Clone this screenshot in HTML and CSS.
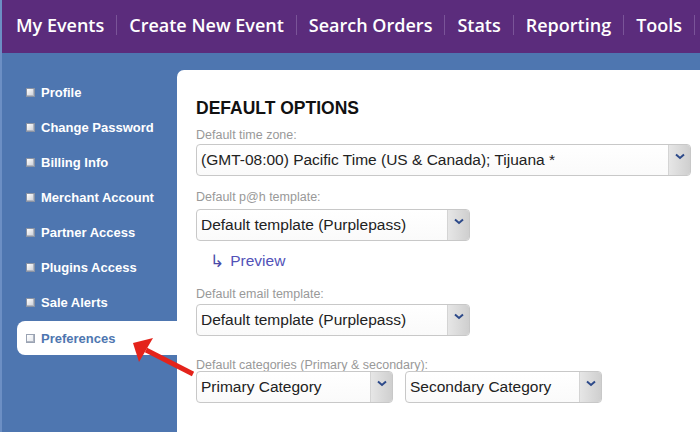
FILE: index.html
```html
<!DOCTYPE html>
<html lang="en">
<head>
  <title>Preferences</title>
  <link rel="stylesheet" href="styles.css">
</head>
<body>
  <div class="topnav">
    <a>My Events</a>
    <a>Create New Event</a>
    <a>Search Orders</a>
    <a>Stats</a>
    <a>Reporting</a>
    <a>Tools</a>
  </div>
  <div class="main">
    <ul class="sidebar">
      <li><span class="box"></span>Profile</li>
      <li><span class="box"></span>Change Password</li>
      <li><span class="box"></span>Billing Info</li>
      <li><span class="box"></span>Merchant Account</li>
      <li><span class="box"></span>Partner Access</li>
      <li><span class="box"></span>Plugins Access</li>
      <li><span class="box"></span>Sale Alerts</li>
      <li class="active"><span class="box"></span>Preferences</li>
    </ul>
    <div class="panel">
      <h2>DEFAULT OPTIONS</h2>

      <div class="field f-zone">
        <div class="label">Default time zone:</div>
        <div class="select wide"><span class="val">(GMT-08:00) Pacific Time (US &amp; Canada); Tijuana *</span><span class="arrow"><svg width="10" height="7" viewBox="0 0 10 7"><path d="M1 1.5 L5 5 L9 1.5" fill="none" stroke="#2d4a8a" stroke-width="2"/></svg></span></div>
      </div>

      <div class="field f-pah">
        <div class="label">Default p@h template:</div>
        <div class="select mid"><span class="val">Default template (Purplepass)</span><span class="arrow"><svg width="10" height="7" viewBox="0 0 10 7"><path d="M1 1.5 L5 5 L9 1.5" fill="none" stroke="#2d4a8a" stroke-width="2"/></svg></span></div>
        <div class="preview"><span class="turn">&#8627;</span><a>Preview</a></div>
      </div>

      <div class="field f-email">
        <div class="label">Default email template:</div>
        <div class="select mid"><span class="val">Default template (Purplepass)</span><span class="arrow"><svg width="10" height="7" viewBox="0 0 10 7"><path d="M1 1.5 L5 5 L9 1.5" fill="none" stroke="#2d4a8a" stroke-width="2"/></svg></span></div>
      </div>

      <div class="field f-cat">
        <div class="label">Default categories (Primary &amp; secondary):</div>
        <div class="pair">
          <div class="select small"><span class="val">Primary Category</span><span class="arrow"><svg width="10" height="7" viewBox="0 0 10 7"><path d="M1 1.5 L5 5 L9 1.5" fill="none" stroke="#2d4a8a" stroke-width="2"/></svg></span></div>
          <div class="select small"><span class="val">Secondary Category</span><span class="arrow"><svg width="10" height="7" viewBox="0 0 10 7"><path d="M1 1.5 L5 5 L9 1.5" fill="none" stroke="#2d4a8a" stroke-width="2"/></svg></span></div>
        </div>
      </div>
    </div>
  </div>

  <svg class="pointer" width="70" height="44" viewBox="0 0 70 44">
    <line x1="16" y1="12" x2="63" y2="36" stroke="#e4231b" stroke-width="5"/>
    <polygon points="3,5 23,0 9,24" fill="#e4231b"/>
  </svg>
</body>
</html>
```

FILE: styles.css
```css
body {
  margin: 0;
  background: #4e76b0;
  font-family: "Liberation Sans", Arial, sans-serif;
  height: 432px;
  overflow: hidden;
  border-left: 2px solid #6c8fc4;
}

.topnav {
  height: 53px;
  box-sizing: border-box;
  padding-bottom: 4px;
  background: #5b2c7c;
  display: flex;
  align-items: center;
  padding-left: 16px;
  margin-left: -2px;
}

.topnav a {
  color: #fff;
  font-family: "Open Sans", sans-serif;
  font-weight: 600;
  font-size: 18px;
  padding: 0 12px 0 0;
  margin-right: 12px;
  border-right: 1px solid #7a5498;
  line-height: 20px;
  white-space: nowrap;
}

.main {
  display: flex;
}

.sidebar {
  list-style: none;
  margin: 0;
  padding: 22px 0 0 0;
  width: 175px;
}

.sidebar li {
  display: flex;
  align-items: center;
  height: 35px;
  margin-left: 15px;
  padding-left: 9px;
  color: #fff;
  font-weight: bold;
  font-size: 13px;
  border-radius: 8px 0 0 8px;
}

.sidebar li.active {
  background: #fff;
  color: #4e76b0;
  height: 34px;
  margin-top: 1px;
}

.box {
  width: 7px;
  height: 7px;
  margin-right: 6px;
  background: linear-gradient(135deg, #fff, #c9ccd4);
  border: 1px solid #8a93a3;
  box-shadow: inset -1px -1px 0 #b0b6c2;
}

.active .box {
  background: linear-gradient(135deg, #fff, #e4e7ec);
  border-color: #9aa3b3;
}

.panel {
  flex: 1;
  background: #fff;
  margin-top: 17px;
  height: 400px;
  border-radius: 7px 0 0 0;
  padding: 28px 9px 0 19px;
}

h2 {
  margin: 0;
  font-size: 17.5px;
  line-height: 20px;
  color: #111;
}

.label {
  color: #999;
  font-size: 12.5px;
  line-height: 14px;
  margin-bottom: 5px;
}

.f-zone { margin-top: 10px; }
.f-zone .label { margin-bottom: 2px; }
.f-pah { margin-top: 14px; }
.f-email { margin-top: 16px; }
.f-email .label { margin-bottom: 3px; }
.f-cat { margin-top: 22px; }
.f-cat .label { margin-bottom: -1px; }

.select {
  display: flex;
  height: 30px;
  border: 1px solid #c8c8c8;
  border-radius: 4px;
  background: linear-gradient(#fff, #fafafa);
  overflow: hidden;
}

.select .val {
  flex: 1;
  padding-left: 4px;
  font-size: 15.5px;
  line-height: 30px;
  color: #222;
  white-space: nowrap;
}

.select .arrow {
  width: 22px;
  display: flex;
  align-items: flex-start;
  justify-content: center;
  padding-top: 8px;
  box-sizing: border-box;
  background: linear-gradient(90deg, #e6e6e6, #cfcfcf);
  border-left: 1px solid #d4d4d4;
}

.wide { width: 493px; }
.mid { width: 272px; }
.small { width: 195px; }

.pair {
  display: flex;
  gap: 12px;
}

.preview {
  height: 20px;
  margin-top: 10px;
  padding-left: 14px;
  display: flex;
  align-items: center;
  font-size: 15.5px;
}

.preview .turn {
  color: #4a4aa8;
  font-family: "DejaVu Sans", sans-serif;
  font-size: 17px;
  margin-right: 6px;
}

.preview a {
  color: #5252b8;
}

.pointer {
  position: absolute;
  left: 130px;
  top: 338px;
  overflow: visible;
}
```
